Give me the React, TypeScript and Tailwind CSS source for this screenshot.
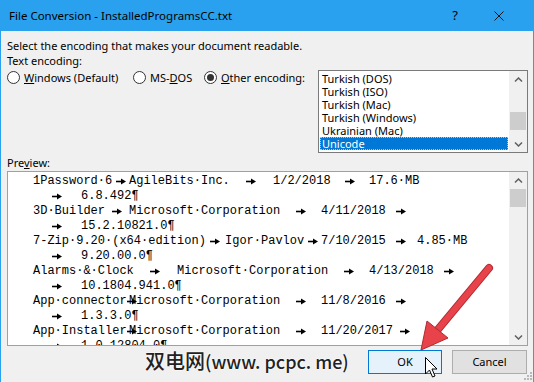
import React from 'react';

const ui = "font-['Noto_Sans',sans-serif]";

type Seg = { t: string; w?: string };

// preview lines; w = cell width up to the next tab stop (48px grid from text start)
const lines: Seg[][] = [
  [{ t: '1Password·6', w: 'w-[96px]' }, { t: 'AgileBits·Inc.', w: 'w-[144px]' }, { t: '1/2/2018', w: 'w-[96px]' }, { t: '17.6·MB' }],
  [{ t: '', w: 'w-[48px]' }, { t: '6.8.492¶' }],
  [{ t: '3D·Builder', w: 'w-[96px]' }, { t: 'Microsoft·Corporation', w: 'w-[192px]' }, { t: '4/11/2018', w: 'w-[96px]' }],
  [{ t: '', w: 'w-[48px]' }, { t: '15.2.10821.0¶' }],
  [{ t: '7-Zip·9.20·(x64·edition)', w: 'w-[192px]' }, { t: 'Igor·Pavlov', w: 'w-[96px]' }, { t: '7/10/2015', w: 'w-[96px]' }, { t: '4.85·MB' }],
  [{ t: '', w: 'w-[48px]' }, { t: '9.20.00.0¶' }],
  [{ t: 'Alarms·&·Clock', w: 'w-[144px]' }, { t: 'Microsoft·Corporation', w: 'w-[192px]' }, { t: '4/13/2018', w: 'w-[96px]' }],
  [{ t: '', w: 'w-[48px]' }, { t: '10.1804.941.0¶' }],
  [{ t: 'App·connector', w: 'w-[96px]' }, { t: 'Microsoft·Corporation', w: 'w-[192px]' }, { t: '11/8/2016', w: 'w-[96px]' }],
  [{ t: '', w: 'w-[48px]' }, { t: '1.3.3.0¶' }],
  [{ t: 'App·Installer', w: 'w-[96px]' }, { t: 'Microsoft·Corporation', w: 'w-[192px]' }, { t: '11/20/2017', w: 'w-[96px]' }],
  [{ t: '', w: 'w-[48px]' }, { t: '1.0.12804.0¶' }],
];

const encodings = ['Turkish (DOS)', 'Turkish (ISO)', 'Turkish (Mac)', 'Turkish (Windows)', 'Ukrainian (Mac)', 'Unicode'];

function TabArrow() {
  return (
    <span className="flex-1 flex justify-center items-center">
      <svg width="10" height="7" viewBox="0 0 10 7" className="shrink-0">
        <path d="M0 3.5H6" stroke="#000" strokeWidth="1.6" />
        <path d="M5 0.5L10 3.5L5 6.5Z" fill="#000" />
      </svg>
    </span>
  );
}

function Chevron({ down }: { down?: boolean }) {
  return (
    <svg width="9" height="6" viewBox="0 0 9 6">
      <path d={down ? 'M1 1.5L4.5 5L8 1.5' : 'M1 4.5L4.5 1L8 4.5'} stroke="#606060" strokeWidth="1.5" fill="none" />
    </svg>
  );
}

function Radio({ checked }: { checked?: boolean }) {
  return (
    <span className="w-[13px] h-[13px] rounded-full border border-[#333] bg-white flex items-center justify-center shrink-0">
      {checked && <span className="w-[7px] h-[7px] rounded-full bg-[#333]" />}
    </span>
  );
}

function ScrollBar({ thumbTop, thumbH }: { thumbTop: string; thumbH: string }) {
  return (
    <div className="w-[18px] h-full bg-[#f0f0f0] flex flex-col">
      <div className="h-[17px] flex items-center justify-center"><Chevron /></div>
      <div className="flex-1 px-[1px]">
        <div className={`${thumbTop} ${thumbH} bg-[#cdcdcd]`} />
      </div>
      <div className="h-[17px] flex items-center justify-center"><Chevron down /></div>
    </div>
  );
}

export default function App() {
  return (
    <div className={`${ui} relative w-[534px] h-[382px] overflow-hidden bg-[#f0f0f0] border-x border-[#2aa1ee] text-[11px] text-black`}>
      <div className="h-[31px] -mx-[1px] bg-[#2aa1ee] flex items-center pl-[9px] pr-[30px]">
        <span className="flex-1 text-[11.5px] leading-[15px]">File Conversion - InstalledProgramsCC.txt</span>
        <span className="text-[13px] leading-[15px] mr-[36px]">?</span>
        <svg width="10" height="10" viewBox="0 0 10 10">
          <path d="M0.5 0.5L9.5 9.5M9.5 0.5L0.5 9.5" stroke="#111" strokeWidth="1" />
        </svg>
      </div>

      <div className="pl-[6px] pr-[5px]">
        <p className="mt-[7px] leading-[15px]">Select the encoding that makes your document readable.</p>
        <p className="leading-[15px]">Text encoding:</p>

        <div className="flex">
          <div className="w-[311px] mt-[2px] h-[15px] flex items-center leading-[15px] whitespace-nowrap">
            <span className="w-[126px] flex items-center gap-[4px]">
              <Radio />
              <span><u>W</u>indows (Default)</span>
            </span>
            <span className="w-[71px] flex items-center gap-[4px]">
              <Radio />
              <span>MS-<u>D</u>OS</span>
            </span>
            <span className="flex items-center gap-[4px]">
              <Radio checked />
              <span><u>O</u>ther encoding:</span>
            </span>
          </div>
          <div className="flex-1 mt-[2px] h-[83px] border border-[#7a7a7a] bg-white flex">
            <div className="flex-1 pt-[1px]">
              {encodings.map((e) => (
                <div
                  key={e}
                  className={
                    e === 'Unicode'
                      ? 'h-[13px] leading-[11px] mx-[1px] pl-[1px] bg-[#0078d7] text-white border border-dotted border-[#f5b75a]'
                      : 'h-[13px] leading-[13px] pl-[3px]'
                  }
                >
                  {e}
                </div>
              ))}
            </div>
            <ScrollBar thumbTop="mt-[24px]" thumbH="h-[18px]" />
          </div>
        </div>

        <p className="mt-[2px] leading-[15px]">Pre<u>v</u>iew:</p>

        <div className="mt-[1px] h-[175px] border border-[#a0a0a0] bg-white flex overflow-hidden">
          <div className="flex-1 pl-[25px] pt-[2px] font-['Liberation_Mono',monospace] text-[12px] leading-[15px] overflow-hidden">
            {lines.map((l, i) => (
              <div key={i} className="flex h-[15px] whitespace-pre">
                {l.map((s, j) =>
                  s.w ? (
                    <span key={j} className={`${s.w} flex shrink-0`}>
                      <span>{s.t}</span>
                      <TabArrow />
                    </span>
                  ) : (
                    <span key={j}>{s.t}</span>
                  )
                )}
              </div>
            ))}
          </div>
          <ScrollBar thumbTop="mt-[0px]" thumbH="h-[18px]" />
        </div>

        <div className="mt-[4px] flex justify-end gap-[10px] mr-[1px]">
          <button className="w-[74px] h-[24px] border border-[#0078d7] bg-[#e5f1fb] leading-[22px]">OK</button>
          <button className="w-[75px] h-[24px] border border-[#adadad] bg-[#e1e1e1] leading-[22px]">Cancel</button>
        </div>
      </div>

      {/* watermark */}
      <div className="absolute left-[144px] top-[348px] font-['Noto_Sans_CJK_SC',sans-serif] leading-[26px] text-[#222] font-medium [text-shadow:0_0_2px_#fff,0_0_2px_#fff] pointer-events-none whitespace-nowrap">
        <span className="text-[20px]">双电网</span>
        <span className="text-[18px]">(www. pcpc. me)</span>
      </div>

      {/* red annotation arrow + cursor */}
      <svg className="absolute left-0 top-0 pointer-events-none" width="534" height="382" viewBox="0 0 534 382">
        <line x1="488" y1="268" x2="434" y2="333" stroke="#b02a30" strokeWidth="8" strokeLinecap="round" />
        <line x1="488" y1="268" x2="434" y2="333" stroke="#e8434b" strokeWidth="6" strokeLinecap="round" />
        <path d="M420 350L426 321L447 338Z" fill="#e8434b" stroke="#b02a30" strokeWidth="1" strokeLinejoin="round" />
        <path d="M424.5 357.5V374L428.5 370L431.5 377L434 376L431 369H436Z" fill="#fff" stroke="#000" strokeWidth="1" strokeLinejoin="round" />
        <g fill="#b8b8b8">
          <rect x="529" y="372" width="2" height="2" />
          <rect x="526" y="375" width="2" height="2" />
          <rect x="529" y="375" width="2" height="2" />
          <rect x="523" y="378" width="2" height="2" />
          <rect x="526" y="378" width="2" height="2" />
          <rect x="529" y="378" width="2" height="2" />
        </g>
      </svg>
    </div>
  );
}
